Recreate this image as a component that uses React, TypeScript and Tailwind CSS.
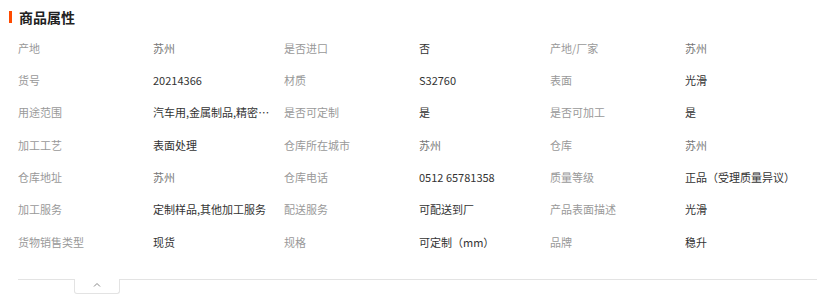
import React from "react";

type Cell = { label: string; value: string; muted?: boolean };

const rows: Cell[][] = [
  [
    { label: "产地", value: "苏州", muted: true },
    { label: "是否进口", value: "否" },
    { label: "产地/厂家", value: "苏州", muted: true },
  ],
  [
    { label: "货号", value: "20214366" },
    { label: "材质", value: "S32760" },
    { label: "表面", value: "光滑" },
  ],
  [
    { label: "用途范围", value: "汽车用,金属制品,精密仪器,机械设备" },
    { label: "是否可定制", value: "是" },
    { label: "是否可加工", value: "是" },
  ],
  [
    { label: "加工工艺", value: "表面处理" },
    { label: "仓库所在城市", value: "苏州", muted: true },
    { label: "仓库", value: "苏州", muted: true },
  ],
  [
    { label: "仓库地址", value: "苏州", muted: true },
    { label: "仓库电话", value: "0512 65781358" },
    { label: "质量等级", value: "正品（受理质量异议）" },
  ],
  [
    { label: "加工服务", value: "定制样品,其他加工服务" },
    { label: "配送服务", value: "可配送到厂" },
    { label: "产品表面描述", value: "光滑" },
  ],
  [
    { label: "货物销售类型", value: "现货" },
    { label: "规格", value: "可定制（mm）" },
    { label: "品牌", value: "稳升" },
  ],
];

export default function App() {
  return (
    <div
      className="w-[827px] h-[295px] bg-white overflow-hidden"
      style={{ fontFamily: '"Noto Sans CJK SC", "Noto Sans", sans-serif' }}
    >
      <div className="flex items-center h-[32px] pl-[9px] pt-[1px]">
        <div className="w-[3px] h-[12px] bg-[#ff4a00]" />
        <div className="ml-[7px] text-[14px] font-bold text-[#222] leading-none">
          商品属性
        </div>
      </div>
      <div className="pl-[18px] w-[816px]">
        {rows.map((row, i) => (
          <div key={i} className="flex h-[32.3px] items-center text-[11px]">
            {row.map((c, j) => (
              <div key={j} className="flex items-center">
                <div className="w-[135px] text-[#999] whitespace-nowrap">{c.label}</div>
                <div
                  className={`w-[131px] whitespace-nowrap ${
                    c.muted ? "text-[#777]" : "text-[#333]"
                  }`}
                >
                  <div className="max-w-[125px] truncate">{c.value}</div>
                </div>
              </div>
            ))}
          </div>
        ))}
      </div>
      <div className="ml-[18px] mt-[21px] w-[799px] border-t border-[#e3e3e3]">
        <div className="ml-[56px] w-[46px] h-[15px] border border-t-0 border-[#e3e3e3] rounded-b-[3px] flex items-center justify-center -mt-px bg-white">
          <svg width="8" height="5" viewBox="0 0 8 5" className="mb-[4px]">
            <path d="M1 4.5 L4 1.5 L7 4.5" fill="none" stroke="#888" strokeWidth="1" />
          </svg>
        </div>
      </div>
    </div>
  );
}
